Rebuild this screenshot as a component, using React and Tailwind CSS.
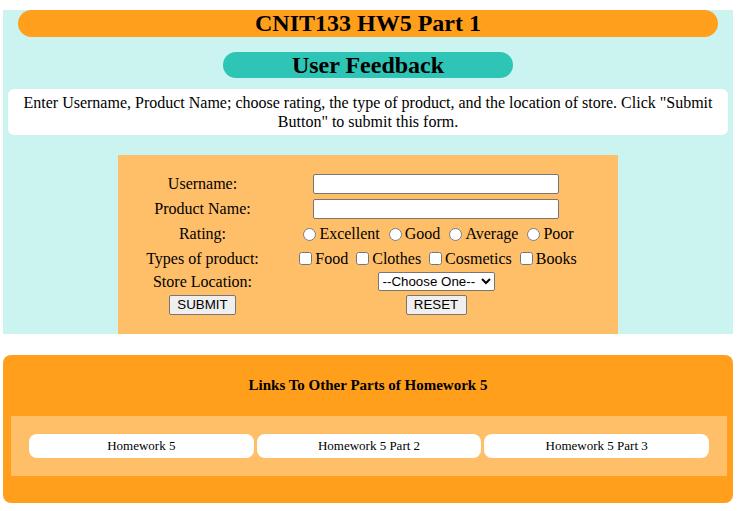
import React from 'react'

function App() {
    const serif = { fontFamily: '"Liberation Serif", "Times New Roman", serif' }

    return (
        <div className="w-[740px] bg-white pt-[10px] px-[3px] pb-[8px] text-black" style={serif}>
            {/* Top Section */}
            <section className="w-[730px] bg-[#cbf3f0] flex flex-col items-center">
                <h1 className="w-[700px] h-[27px] rounded-full bg-[#ff9f1c] text-[24px] leading-[27px] font-bold text-center">
                    CNIT133 HW5 Part 1
                </h1>
                <h2 className="mt-[15px] w-[290px] h-[26px] rounded-full bg-[#2ec4b6] text-[24px] leading-[26px] font-bold text-center">
                    User Feedback
                </h2>
                <p className="mt-[11px] w-[720px] bg-white rounded-[6px] px-[8px] py-[4px] text-[16px] leading-[19px] text-center">
                    Enter Username, Product Name; choose rating, the type of product, and the location of store. Click "Submit Button" to submit this form.
                </p>

                {/* Form */}
                <form className="mt-[20px] w-[500px] h-[179px] bg-[#ffbf69] pl-[16px] pt-[17px]">
                    <div className="grid grid-cols-[137px_280px] gap-x-[25px] grid-rows-[24px_25px_26px_23px_23px_24px] items-center text-[16px] leading-[18px]">
                        <label className="text-center">Username:</label>
                        <div className="flex justify-center">
                            <input type="text" className="w-[246px] h-[20px] bg-white border border-[#767676] rounded-[2px]" />
                        </div>

                        <label className="text-center">Product Name:</label>
                        <div className="flex justify-center">
                            <input type="text" className="w-[246px] h-[20px] bg-white border border-[#767676] rounded-[2px]" />
                        </div>

                        <label className="text-center">Rating:</label>
                        <div className="flex justify-center items-center">
                            {['Excellent', 'Good', 'Average', 'Poor'].map((r, i) => (
                                <span key={r} className={`flex items-center ${i > 0 ? 'ml-[4px]' : ''}`}>
                                    <input type="radio" name="rating" className="ml-[5px] mr-[3px]" />
                                    {r}
                                </span>
                            ))}
                        </div>

                        <label className="text-center">Types of product:</label>
                        <div className="flex justify-center items-center">
                            {['Food', 'Clothes', 'Cosmetics', 'Books'].map((t, i) => (
                                <span key={t} className={`flex items-center ${i > 0 ? 'ml-[4px]' : ''}`}>
                                    <input type="checkbox" className="ml-[4px] mr-[3px]" />
                                    {t}
                                </span>
                            ))}
                        </div>

                        <label className="text-center">Store Location:</label>
                        <div className="flex justify-center">
                            <select
                                className="w-[117px] h-[19px] bg-white border border-[#767676] rounded-[2px] text-[13.33px]"
                                style={{ fontFamily: '"Liberation Sans", Arial, sans-serif' }}
                            >
                                <option>--Choose One--</option>
                                <option>San Francisco</option>
                                <option>Oakland</option>
                            </select>
                        </div>

                        <div className="flex justify-center">
                            <button
                                type="button"
                                className="w-[67px] h-[20px] bg-[#efefef] border border-[#767676] rounded-[2px] text-[13.33px] leading-[16px]"
                                style={{ fontFamily: '"Liberation Sans", Arial, sans-serif' }}
                            >
                                SUBMIT
                            </button>
                        </div>
                        <div className="flex justify-center">
                            <button
                                type="reset"
                                className="w-[61px] h-[20px] bg-[#efefef] border border-[#767676] rounded-[2px] text-[13.33px] leading-[16px]"
                                style={{ fontFamily: '"Liberation Sans", Arial, sans-serif' }}
                            >
                                RESET
                            </button>
                        </div>
                    </div>
                </form>
            </section>

            {/* Links Section */}
            <section className="mt-[21px] w-[730px] rounded-[8px] bg-[#ff9f1c] pb-[27px]">
                <h4 className="h-[61px] flex items-center justify-center text-[15px] font-bold">
                    Links To Other Parts of Homework 5
                </h4>
                <div className="ml-[8px] mr-[6px] bg-[#ffbf69] pl-[18px] pr-[18px] py-[18px] grid grid-cols-3 gap-[3px]">
                    {['Homework 5', 'Homework 5 Part 2', 'Homework 5 Part 3'].map((l) => (
                        <a key={l} href="#" className="h-[24px] rounded-[8px] bg-white flex items-center justify-center text-[13px]">
                            {l}
                        </a>
                    ))}
                </div>
            </section>
        </div>
    )
}

export default App
